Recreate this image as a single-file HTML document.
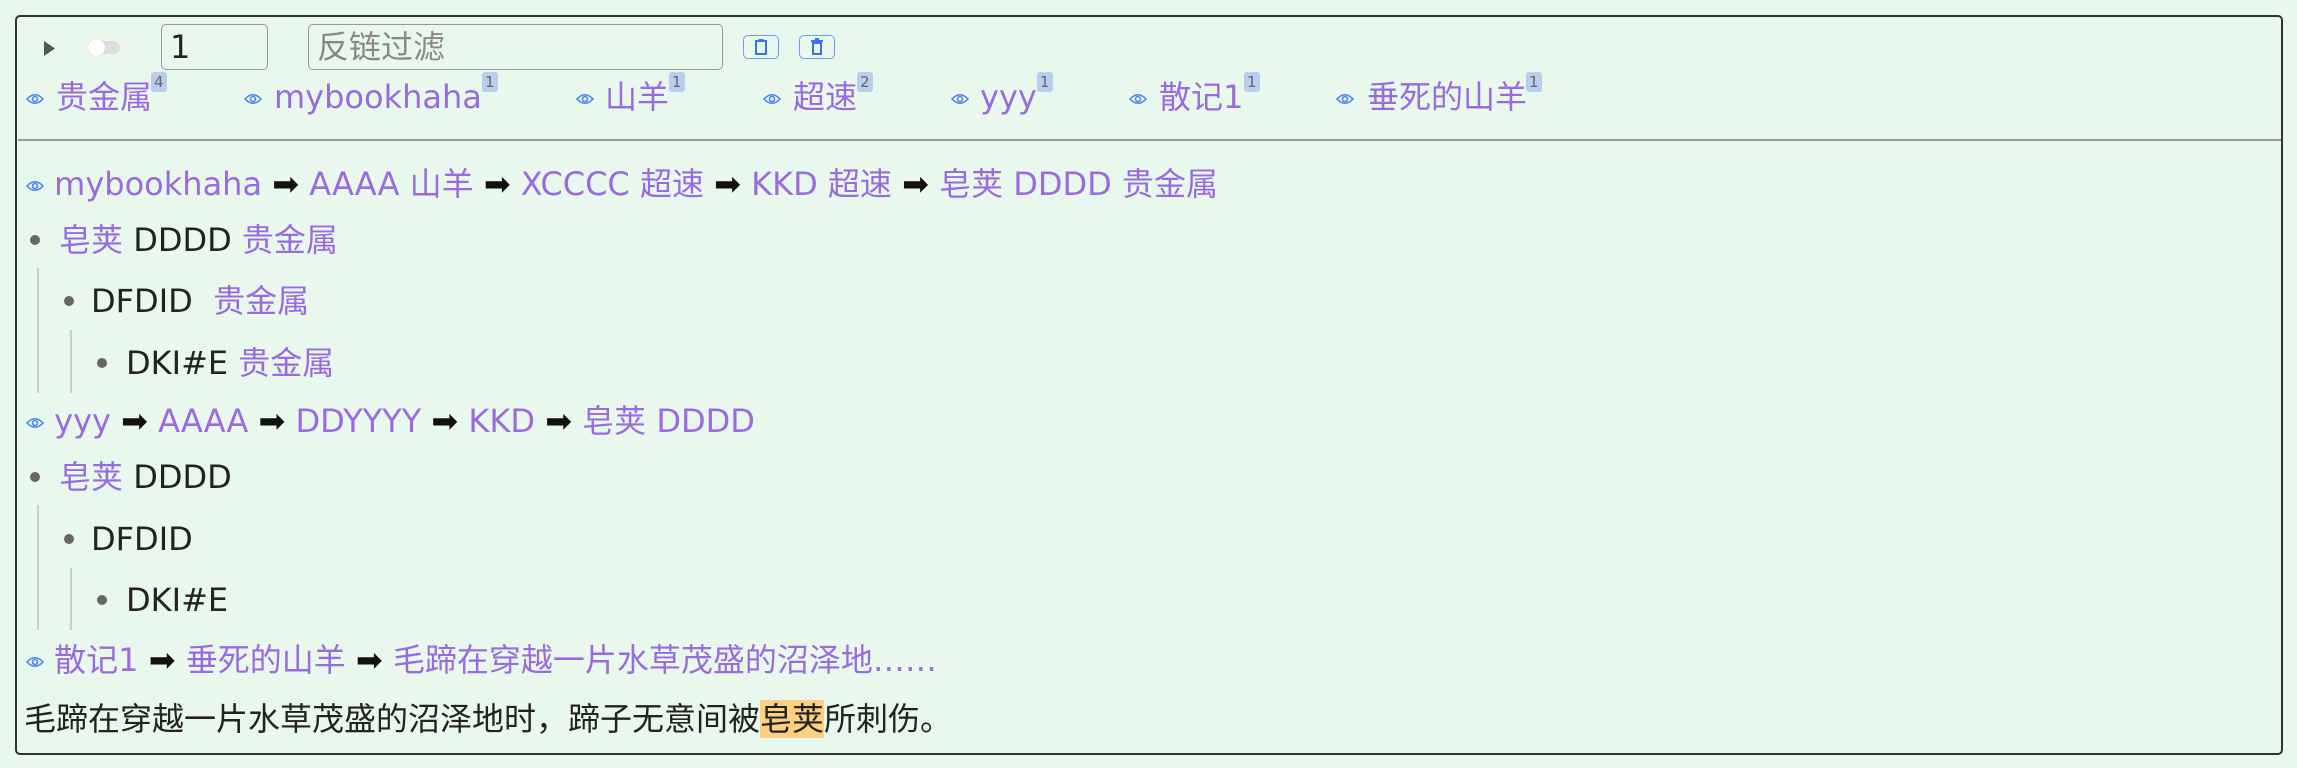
<!DOCTYPE html>
<html><head><meta charset="utf-8"><style>
*{margin:0;padding:0;box-sizing:border-box}
body{width:2297px;height:768px;background:#e8f8ec;position:relative;overflow:hidden;font-family:"DejaVu Sans","Noto Sans CJK SC",sans-serif;font-size:32px;color:#222}
.box{position:absolute;left:15px;top:15px;width:2268px;height:740px;border:2px solid #333;border-radius:5px}
.r{position:absolute;line-height:40px;white-space:nowrap}
.p{color:#9a6be0}
.eye{display:inline-block;width:18px;height:12px;vertical-align:middle}
.sup{position:absolute;font-size:15px;line-height:20px;background:#b9cdee;color:#666;border-radius:3px;padding:0 3px}
.bul{position:absolute;width:10px;height:10px;border-radius:50%;background:#666}
.vl{position:absolute;width:1.5px;background:#ccc}
.ar{color:#111}
</style></head><body>
<div class="box"></div>
<svg style="position:absolute;left:44px;top:41px" width="12" height="15"><path d="M0 0L11 7.5L0 15Z" fill="#555"/></svg>
<div style="position:absolute;left:90px;top:41px;width:30px;height:13px;border-radius:7px;background:#ddd"></div>
<div style="position:absolute;left:88px;top:39px;width:17px;height:17px;border-radius:50%;background:#fff;box-shadow:0 0 1px #aaa"></div>
<div style="position:absolute;left:161px;top:24px;width:107px;height:46px;border:1.5px solid #999;border-radius:5px;line-height:44px;padding-left:8px;font-size:32px">1</div>
<div style="position:absolute;left:308px;top:24px;width:415px;height:46px;border:1.5px solid #999;border-radius:5px;line-height:44px;padding-left:8px;color:#888;font-size:32px">反链过滤</div>
<div style="position:absolute;left:743px;top:35px;width:36px;height:24px;border:1.5px solid #6d9ef2;border-radius:5px"></div>
<svg style="position:absolute;left:754px;top:38px" width="14" height="18"><rect x="2" y="3" width="10" height="13" fill="none" stroke="#3a72e8" stroke-width="2"/><rect x="4.5" y="1" width="5" height="3" fill="#3a72e8"/></svg>
<div style="position:absolute;left:799px;top:35px;width:36px;height:24px;border:1.5px solid #6d9ef2;border-radius:5px"></div>
<svg style="position:absolute;left:810px;top:38px" width="14" height="18"><rect x="1" y="2" width="12" height="2" fill="#3a72e8"/><rect x="5" y="0" width="4" height="2" fill="#3a72e8"/><rect x="3" y="5" width="8" height="11" fill="none" stroke="#3a72e8" stroke-width="2"/></svg>

<svg width="0" height="0" style="position:absolute"><defs><symbol id="e" viewBox="0 0 18 12"><path d="M1 6Q9 -2.5 17 6Q9 14.5 1 6Z" fill="none" stroke="#4a86ee" stroke-width="1.6"/><circle cx="9" cy="6" r="2.5" fill="none" stroke="#4a86ee" stroke-width="1.6"/></symbol></defs></svg>

<div class="r p" style="left:26px;top:77px"><svg class="eye"><use href="#e"/></svg></div><div class="r p" style="left:56px;top:77px">贵金属</div><div class="sup" style="left:151px;top:72px">4</div>
<div class="r p" style="left:244px;top:77px"><svg class="eye"><use href="#e"/></svg></div><div class="r p" style="left:274px;top:77px">mybookhaha</div><div class="sup" style="left:482px;top:72px">1</div>
<div class="r p" style="left:576px;top:77px"><svg class="eye"><use href="#e"/></svg></div><div class="r p" style="left:605px;top:77px">山羊</div><div class="sup" style="left:669px;top:72px">1</div>
<div class="r p" style="left:763px;top:77px"><svg class="eye"><use href="#e"/></svg></div><div class="r p" style="left:793px;top:77px">超速</div><div class="sup" style="left:857px;top:72px">2</div>
<div class="r p" style="left:951px;top:77px"><svg class="eye"><use href="#e"/></svg></div><div class="r p" style="left:980px;top:77px">yyy</div><div class="sup" style="left:1037px;top:72px">1</div>
<div class="r p" style="left:1129px;top:77px"><svg class="eye"><use href="#e"/></svg></div><div class="r p" style="left:1159px;top:77px">散记1</div><div class="sup" style="left:1244px;top:72px">1</div>
<div class="r p" style="left:1336px;top:77px"><svg class="eye"><use href="#e"/></svg></div><div class="r p" style="left:1367px;top:77px">垂死的山羊</div><div class="sup" style="left:1526px;top:72px">1</div>

<div style="position:absolute;left:18px;top:139px;width:2263px;height:1.5px;background:#999"></div>

<div class="r" style="left:26px;top:164px"><svg class="eye"><use href="#e"/></svg> <span class="p">mybookhaha</span> <span class="ar">➡</span> <span class="p">AAAA 山羊</span> <span class="ar">➡</span> <span class="p">XCCCC 超速</span> <span class="ar">➡</span> <span class="p">KKD 超速</span> <span class="ar">➡</span> <span class="p">皂荚 DDDD 贵金属</span></div>
<div class="bul" style="left:30px;top:235px"></div>
<div class="r" style="left:59px;top:220px"><span class="p">皂荚</span> DDDD <span class="p">贵金属</span></div>
<div class="vl" style="left:37px;top:268px;height:125px"></div>
<div class="bul" style="left:64px;top:296px"></div>
<div class="r" style="left:91px;top:281px">DFDID &nbsp;<span class="p">贵金属</span></div>
<div class="vl" style="left:70px;top:330px;height:63px"></div>
<div class="bul" style="left:97px;top:358px"></div>
<div class="r" style="left:126px;top:343px">DKI#E <span class="p">贵金属</span></div>

<div class="r" style="left:26px;top:401px"><svg class="eye"><use href="#e"/></svg> <span class="p">yyy</span> <span class="ar">➡</span> <span class="p">AAAA</span> <span class="ar">➡</span> <span class="p">DDYYYY</span> <span class="ar">➡</span> <span class="p">KKD</span> <span class="ar">➡</span> <span class="p">皂荚 DDDD</span></div>
<div class="bul" style="left:30px;top:472px"></div>
<div class="r" style="left:59px;top:457px"><span class="p">皂荚</span> DDDD</div>
<div class="vl" style="left:37px;top:505px;height:125px"></div>
<div class="bul" style="left:64px;top:534px"></div>
<div class="r" style="left:91px;top:519px">DFDID</div>
<div class="vl" style="left:70px;top:568px;height:62px"></div>
<div class="bul" style="left:97px;top:595px"></div>
<div class="r" style="left:126px;top:580px">DKI#E</div>

<div class="r" style="left:26px;top:640px"><svg class="eye"><use href="#e"/></svg> <span class="p">散记1</span> <span class="ar">➡</span> <span class="p">垂死的山羊</span> <span class="ar">➡</span> <span class="p">毛蹄在穿越一片水草茂盛的沼泽地……</span></div>
<div class="r" style="left:24px;top:699px">毛蹄在穿越一片水草茂盛的沼泽地时，蹄子无意间被<span style="background:#fbd081">皂荚</span>所刺伤。</div>
</body></html>
